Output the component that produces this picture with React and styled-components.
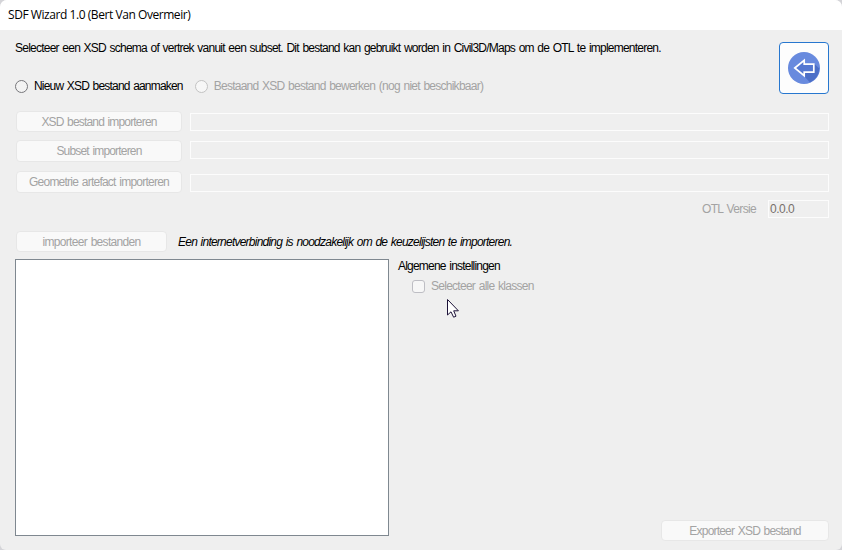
import React from "react";
import styled, { createGlobalStyle } from "styled-components";

const GlobalStyle = createGlobalStyle`
  * { box-sizing: border-box; }
  body { margin: 0; background: #d4d4d8; overflow: hidden; }
`;

const Window = styled.div`
  position: relative;
  display: flex;
  flex-direction: column;
  width: 842px;
  height: 550px;
  overflow: hidden;
  border-radius: 7px 7px 6px 6px;
  background: #efefef;
  color: #000;
  font: 12px/14px "Liberation Sans", Arial, sans-serif;
`;

const TitleBar = styled.header`
  display: flex;
  align-items: center;
  height: 30px;
  padding-left: 8px;
  background: #fff;
`;

const Title = styled.span`
  font-family: "Open Sans", "Segoe UI", sans-serif;
  letter-spacing: -0.44px;
  white-space: pre;
`;

const Text = styled.span`
  display: block;
  white-space: pre;
  letter-spacing: ${(p) => p.$spacing}px;
  word-spacing: 1px;
  color: ${(p) => (p.$disabled ? "#a3a3a3" : "inherit")};
  font-style: ${(p) => (p.$italic ? "italic" : "normal")};
`;

const Body = styled.main`
  display: flex;
  flex-direction: column;
  flex: 1;
  padding: 11px 13px 9px 15px;
`;

const Header = styled.section`
  display: flex;
  justify-content: space-between;
  height: 70px;
`;

const Options = styled.div`
  display: flex;
  gap: 12px;
  margin-top: 24px;
`;

const Choice = styled.label`
  display: flex;
  align-items: center;
  gap: 6px;
  height: 14px;
`;

const Radio = styled.span`
  width: 13px;
  height: 13px;
  border: 1px solid ${(p) => (p.$disabled ? "#c3c3c3" : "#77777b")};
  border-radius: 50%;
  background: ${(p) => (p.$disabled ? "#f7f7f7" : "#f3f3f3")};
`;

const BackButton = styled.button`
  display: grid;
  place-items: center;
  width: 50px;
  height: 52px;
  margin-top: 1px;
  padding: 0;
  border: 1px solid #2777cf;
  border-radius: 4px;
  background: #fdfdfd;
`;

const ImportRow = styled.div`
  display: flex;
  gap: 8px;
  height: ${(p) => p.$height}px;
`;

const Button = styled.button`
  display: flex;
  flex: none;
  align-items: center;
  justify-content: center;
  width: ${(p) => p.$width}px;
  height: ${(p) => p.$height || 22}px;
  margin-left: 1px;
  padding: 0;
  border: 1px solid #e7e7e7;
  border-radius: 4px;
  background: #f9f9f9;
  color: #a3a3a3;
  font: inherit;
`;

const ExportButton = styled(Button)`
  align-self: flex-end;
  margin-top: auto;
`;

const Field = styled.div`
  flex: ${(p) => (p.$width ? "none" : 1)};
  width: ${(p) => p.$width || 0}px;
  height: 18px;
  margin-top: ${(p) => p.$top || 0}px;
  padding: 1px 1px;
  border: 1px solid #fcfcfc;
  background: #efefef;
  color: #77706a;
`;

const VersionRow = styled.div`
  display: flex;
  justify-content: flex-end;
  align-items: center;
  gap: 12px;
  height: 18px;
`;

const ConnectionRow = styled.div`
  display: flex;
  align-items: center;
  gap: 11px;
  height: 21px;
  margin-top: 13px;
`;

const Content = styled.section`
  display: flex;
  gap: 9px;
  margin-top: 7px;
  height: 282px;
`;

const ClassList = styled.div`
  width: 374px;
  height: 277px;
  border: 1px solid #7f8890;
  background: #fff;
`;

const Settings = styled.div`
  display: flex;
  flex: 1;
  flex-direction: column;
`;

const SettingChoice = styled(Choice)`
  margin: 6px 0 0 14px;
`;

const Checkbox = styled.span`
  width: 13px;
  height: 13px;
  border: 1px solid #bebec4;
  border-radius: 3px;
  background: #f7f7f7;
`;

const Pointer = styled.svg`
  position: absolute;
  left: 446px;
  top: 298px;
`;

function BackIcon() {
  return (
    <svg width="32" height="32" viewBox="0 0 32 32" aria-hidden="true">
      <circle cx="16" cy="16" r="16" fill="#688ade" />
      <path d="M26 11.5 L31.3 16.6 A16 16 0 0 1 22 30.4 L16 24 L17 20 H26Z" fill="#4c6fc7" />
      <path
        d="M6.8 16 L16.2 8.4 V12.2 H25.8 V20.2 H16.2 V23.7Z"
        fill="#5578d1"
        stroke="#fff"
        strokeWidth="1.7"
      />
    </svg>
  );
}

const imports = [
  { text: "XSD bestand importeren", spacing: -0.83, height: 21, row: 29, top: 2 },
  { text: "Subset importeren", spacing: -0.82, height: 22, row: 31, top: 1 },
  { text: "Geometrie artefact importeren", spacing: -0.76, height: 22, row: 29, top: 3 },
];

export default function App() {
  return (
    <>
      <GlobalStyle />
      <Window>
        <TitleBar>
          <Title>SDF Wizard 1.0 (Bert Van Overmeir)</Title>
        </TitleBar>
        <Body>
          <Header>
            <div>
              <Text $spacing={-0.77}>
                Selecteer een XSD schema of vertrek vanuit een subset. Dit bestand kan gebruikt worden in Civil3D/Maps om de OTL te implementeren.
              </Text>
              <Options>
                <Choice>
                  <Radio />
                  <Text $spacing={-0.81}>Nieuw XSD bestand aanmaken</Text>
                </Choice>
                <Choice>
                  <Radio $disabled />
                  <Text $spacing={-0.745} $disabled>
                    Bestaand XSD bestand bewerken (nog niet beschikbaar)
                  </Text>
                </Choice>
              </Options>
            </div>
            <BackButton aria-label="Terug">
              <BackIcon />
            </BackButton>
          </Header>
          {imports.map((item) => (
            <ImportRow key={item.text} $height={item.row}>
              <Button $width={166} $height={item.height} disabled>
                <Text $spacing={item.spacing}>{item.text}</Text>
              </Button>
              <Field $top={item.top} />
            </ImportRow>
          ))}
          <VersionRow>
            <Text $spacing={-0.66} $disabled>OTL Versie</Text>
            <Field $width={61}>
              <Text $spacing={-0.48}>0.0.0</Text>
            </Field>
          </VersionRow>
          <ConnectionRow>
            <Button $width={151} $height={21} disabled>
              <Text $spacing={-0.69}>importeer bestanden</Text>
            </Button>
            <Text $spacing={-0.77} $italic>
              Een internetverbinding is noodzakelijk om de keuzelijsten te importeren.
            </Text>
          </ConnectionRow>
          <Content>
            <ClassList />
            <Settings>
              <Text $spacing={-0.79}>Algemene instellingen</Text>
              <SettingChoice>
                <Checkbox />
                <Text $spacing={-0.73} $disabled>Selecteer alle klassen</Text>
              </SettingChoice>
              <ExportButton $width={168} $height={21} disabled>
                <Text $spacing={-0.8}>Exporteer XSD bestand</Text>
              </ExportButton>
            </Settings>
          </Content>
        </Body>
        <Pointer width="14" height="21" viewBox="0 0 14 21" aria-hidden="true">
          <path
            d="M1.5 1.5 V17 L5 13.8 L7.6 19.2 L10 18.2 L7.7 12.8 H12.4Z"
            fill="#fff"
            stroke="#1c1238"
            strokeWidth="1"
          />
        </Pointer>
      </Window>
    </>
  );
}
